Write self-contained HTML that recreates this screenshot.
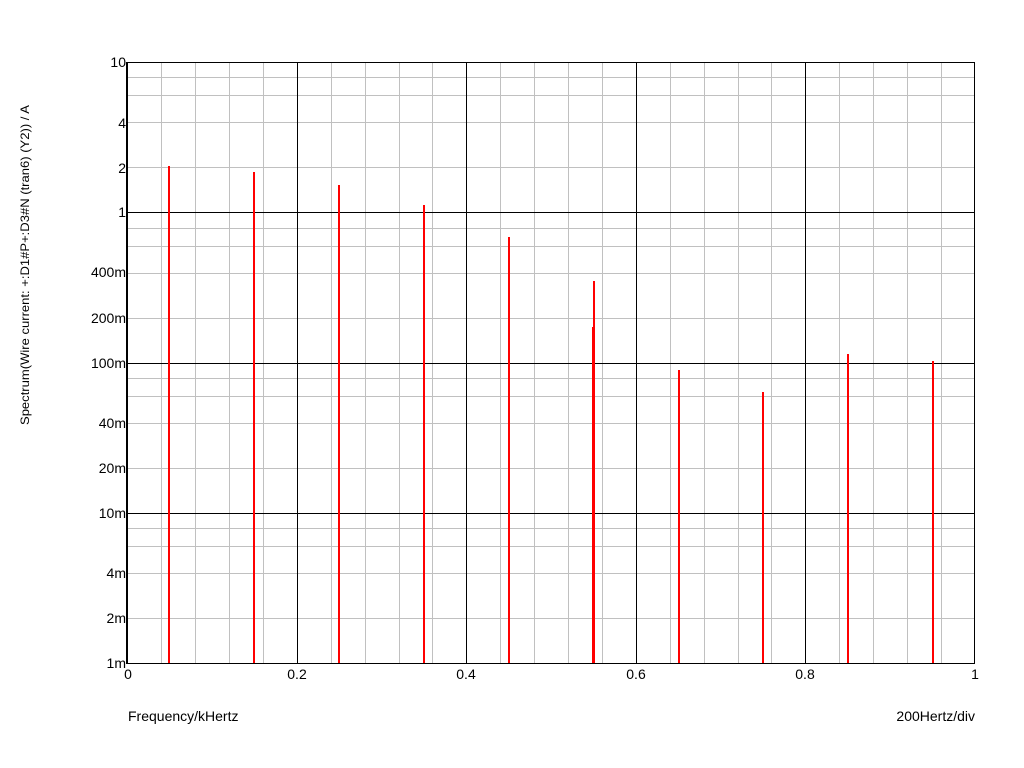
<!DOCTYPE html>
<html><head><meta charset="utf-8"><style>html,body{margin:0;padding:0;background:#fff}svg{display:block}text{font-family:"Liberation Sans",Arial,sans-serif;fill:#000}</style></head>
<body>
<svg width="1024" height="768" viewBox="0 0 1024 768" xmlns="http://www.w3.org/2000/svg">
<rect width="1024" height="768" fill="#fff"/>
<g stroke="#c0c0c0" stroke-width="1" shape-rendering="crispEdges">
<path d="M161.5 62V663M195.5 62V663M229.5 62V663M263.5 62V663M331.5 62V663M365.5 62V663M399.5 62V663M432.5 62V663M500.5 62V663M534.5 62V663M568.5 62V663M602.5 62V663M670.5 62V663M704.5 62V663M738.5 62V663M771.5 62V663M839.5 62V663M873.5 62V663M907.5 62V663M941.5 62V663"/>
<path d="M127 618.5H975M127 573.5H975M127 546.5H975M127 528.5H975M127 468.5H975M127 423.5H975M127 396.5H975M127 378.5H975M127 318.5H975M127 273.5H975M127 246.5H975M127 228.5H975M127 167.5H975M127 122.5H975M127 95.5H975M127 77.5H975"/>
</g>
<g stroke="#000" stroke-width="1" shape-rendering="crispEdges">
<path d="M127 62.5H975M127 212.5H975M127 363.5H975M127 513.5H975M127 663.5H975M297.5 62V663M466.5 62V663M636.5 62V663M805.5 62V663M974.5 62V664"/>
<path d="M127 62V664" stroke-width="2"/>
</g>
<g fill="#ff0000" shape-rendering="crispEdges">
<rect x="168" y="166" width="2" height="497"/>
<rect x="253" y="172" width="2" height="491"/>
<rect x="338" y="185" width="2" height="478"/>
<rect x="423" y="205" width="2" height="458"/>
<rect x="508" y="237" width="2" height="426"/>
<rect x="593" y="281" width="2" height="382"/>
<rect x="592" y="327" width="2" height="336"/>
<rect x="678" y="370" width="2" height="293"/>
<rect x="762" y="392" width="2" height="271"/>
<rect x="847" y="354" width="2" height="309"/>
<rect x="932" y="361" width="2" height="302"/>
</g>
<g font-size="14" text-anchor="end">
<text x="126" y="67">10</text>
<text x="126" y="128">4</text>
<text x="126" y="173">2</text>
<text x="126" y="217">1</text>
<text x="126" y="277">400m</text>
<text x="126" y="323">200m</text>
<text x="126" y="368">100m</text>
<text x="126" y="428">40m</text>
<text x="126" y="473">20m</text>
<text x="126" y="518">10m</text>
<text x="126" y="578">4m</text>
<text x="126" y="623">2m</text>
<text x="126" y="668">1m</text>
</g>
<g font-size="14" text-anchor="middle">
<text x="128" y="679">0</text>
<text x="297" y="679">0.2</text>
<text x="466" y="679">0.4</text>
<text x="636" y="679">0.6</text>
<text x="805" y="679">0.8</text>
<text x="975" y="679">1</text>
</g>
<text x="128" y="721" font-size="14">Frequency/kHertz</text>
<text x="975" y="721" font-size="14" text-anchor="end">200Hertz/div</text>
<text transform="translate(29,265) rotate(-90)" font-size="12" text-anchor="middle" textLength="320" lengthAdjust="spacingAndGlyphs">Spectrum(Wire current: +:D1#P+:D3#N (tran6) (Y2)) / A</text>
</svg>
</body></html>
